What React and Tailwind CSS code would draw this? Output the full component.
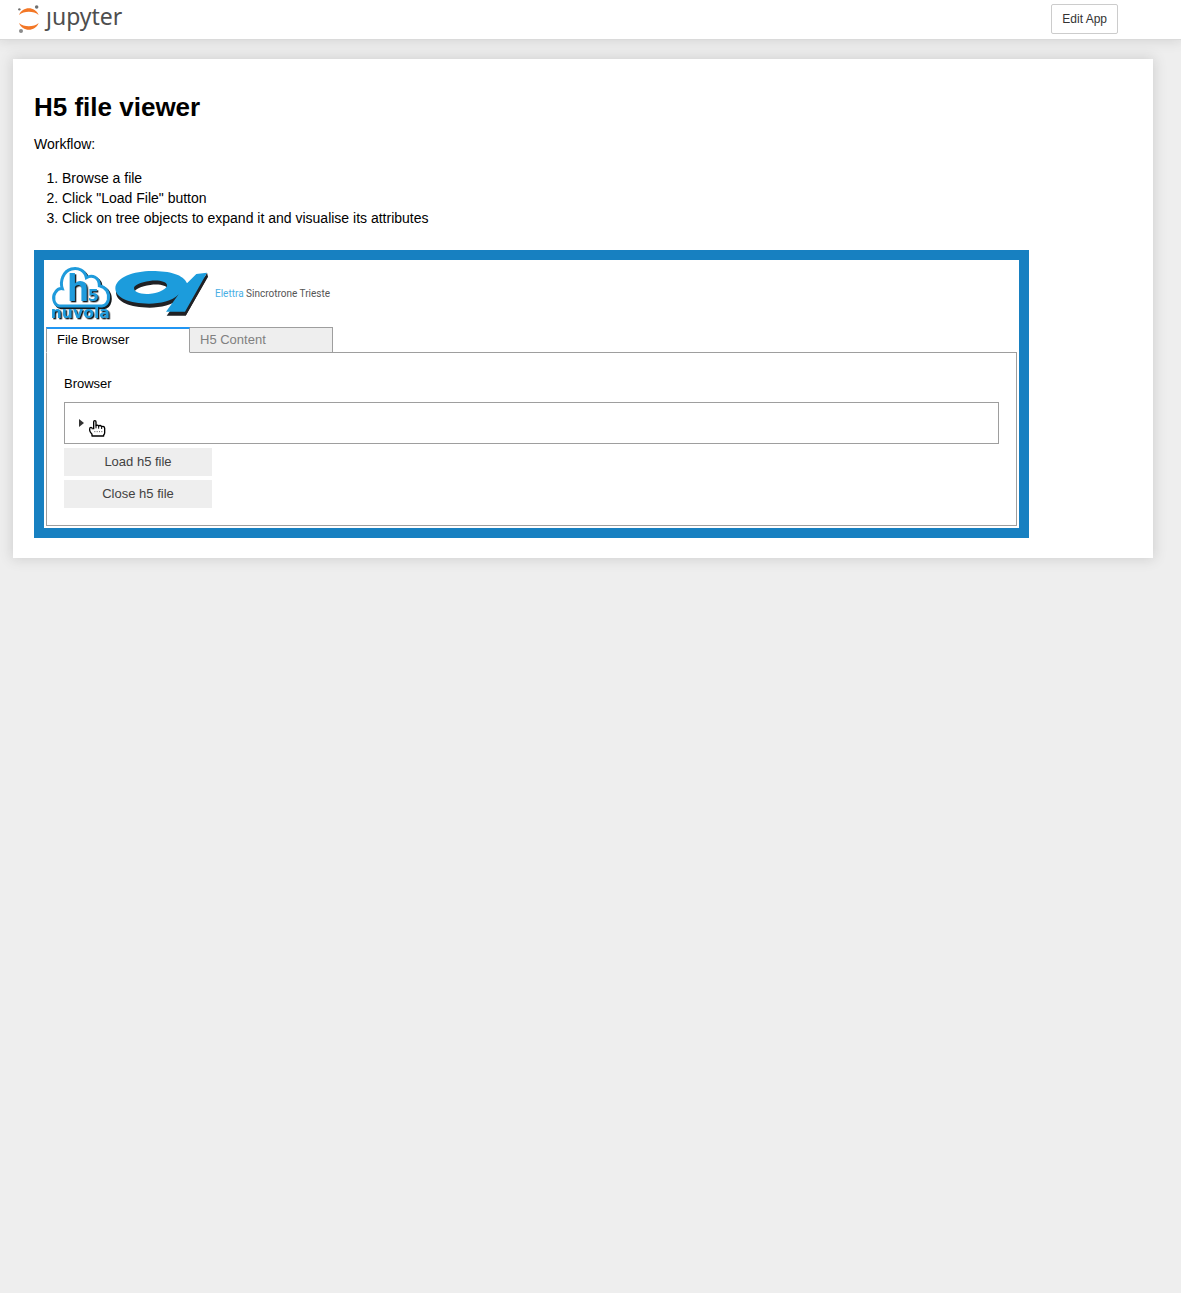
import React, { useState } from "react";

function JupyterMark() {
  return (
    <svg className="h-[30px] w-[24px]" viewBox="0 0 72 90" aria-hidden="true">
      <path d="M3 33C13 6 52 6 62 33C47 20 18 20 3 33Z" fill="#f37726" />
      <path d="M3 57C13 84 52 84 62 57C47 70 18 70 3 57Z" fill="#f37726" />
      <circle cx="56" cy="9" r="5.3" fill="#6f7070" />
      <circle cx="4" cy="16" r="3.6" fill="#6f7070" />
      <circle cx="9" cy="81" r="6" fill="#8b8b8b" />
    </svg>
  );
}

const CLOUD =
  "M57 150C41 146 36 123 46 109C52 100 61 97 67 98C59 75 70 46 94 39C116 33 135 45 139 65C157 54 178 65 178 89C198 93 209 111 205 131C202 144 196 149 186 150Z";

function NuvolaLogo() {
  return (
    <svg
      className="h-[64px] w-[69px]"
      viewBox="18 18 207 192"
      role="img"
      aria-label="h5 nuvola"
      fontFamily='"DejaVu Sans", sans-serif'
      fontWeight="bold"
    >
      <path d={CLOUD} fill="none" stroke="#14191d" strokeWidth="9" transform="translate(5 5)" />
      <path d={CLOUD} fill="#fff" stroke="#1f9bdc" strokeWidth="9" />
      <g fill="#1f9bdc" className="[filter:drop-shadow(4px_4px_0_#14191d)]">
        <text x="83" y="136" fontSize="112" fontFamily="Roboto, sans-serif">h</text>
        <text x="143" y="136" fontSize="48">5</text>
        <text x="32" y="186" fontSize="47">nuvola</text>
      </g>
    </svg>
  );
}

const SWOOSH =
  "M15 85C16 52 70 33 125 33C178 33 220 44 230 70L258 42L290 38L224 155L167 155L205 103C185 124 150 131 116 131C57 131 15 114 15 85ZM71 84C71 97 92 104 121 101C149 98 171 86 170 75C168 64 143 59 118 63C90 67 71 76 71 84Z";

function ElettraLogo() {
  return (
    <svg className="h-[48px] w-[94px]" viewBox="14 30 282 144" role="img" aria-label="Elettra">
      <path d={SWOOSH} fill="#202124" fillRule="evenodd" transform="translate(2 12)" />
      <path d="M290 38L293 50L226 167L224 155Z" fill="#202124" />
      <path d={SWOOSH} fill="#1c9cdc" fillRule="evenodd" />
    </svg>
  );
}

function HandCursor() {
  return (
    <svg className="absolute left-[24px] top-[17px] h-[18px] w-[18px]" viewBox="0 0 54 54" aria-hidden="true">
      <path
        d="M14 28V6Q14 2 17.500 2T21 6V17Q25 13 29 18Q34 14 38 20Q46 17 47 25V38Q47 42 44 45V48H9V43Q2 36 2 31V27Q2 22 6 22Q10 22 10 28"
        fill="#fff"
        stroke="#000"
        strokeWidth="4"
        strokeLinejoin="round"
      />
      <path d="M21 17V25M29 18V26M38 20V27" stroke="#000" strokeWidth="3" />
      <path d="M16 35H42" stroke="#555" strokeWidth="3" strokeDasharray="3 4" />
    </svg>
  );
}

const TABS = ["File Browser", "H5 Content"];

export default function App() {
  const [active, setActive] = useState(0);
  return (
    <div className='min-h-screen bg-[#eee] font-["Liberation_Sans",Arial,sans-serif] text-[14px] leading-[20px] text-black'>
      <header className="relative flex h-[39px] items-center justify-between bg-white pb-[2px] pl-[18px] pr-[63px] shadow-[0_1px_0_#dadada,0_0_12px_1px_rgba(87,87,87,0.2)]">
        <a href="#" aria-label="jupyter" className="flex items-center gap-[4px]">
          <JupyterMark />
          <span className='pb-[5px] font-["Noto_Sans",sans-serif] text-[23px] leading-[30px] text-[#4e4e4e]'>ȷupyter</span>
        </a>
        <button type="button" className="h-[30px] rounded-[2px] border border-[#ccc] px-[10px] text-[12px] leading-[18px] text-[#333]">
          Edit App
        </button>
      </header>

      <main className="ml-[13px] mr-[28px] mt-[20px] bg-white pb-[20px] pl-[21px] pr-[124px] pt-[35px] shadow-[0_0_12px_1px_rgba(87,87,87,0.2)]">
        <h1 className="text-[26px] font-bold leading-[26px]">H5 file viewer</h1>
        <p className="mt-[14px]">Workflow:</p>
        <ol className="mt-[14px] list-decimal pl-[28px]">
          <li>Browse a file</li>
          <li>Click "Load File" button</li>
          <li>Click on tree objects to expand it and visualise its attributes</li>
        </ol>

        <section className="mt-[22px] border-[10px] border-[#1780c1] p-[2px]">
          <div className="flex h-[65px] items-start">
            <NuvolaLogo />
            <div className="flex items-center pt-[8px]">
              <ElettraLogo />
              <p className="ml-[6px] font-[Roboto,sans-serif] text-[10px] leading-[12px] text-[#555]">
                <span className="text-[#4aaee4]">Elettra</span> Sincrotrone Trieste
              </p>
            </div>
          </div>

          <div role="tablist" className="relative flex text-[13px] leading-[24px]">
            {TABS.map((name, i) => (
              <button
                key={name}
                type="button"
                role="tab"
                id={"tab-" + i}
                aria-controls="tab-panel"
                aria-selected={active === i}
                onClick={() => setActive(i)}
                className={
                  "-mr-px -mb-px h-[26px] w-[144px] border border-[#9e9e9e] px-[10px] text-left " +
                  (active === i
                    ? "relative border-b-white border-t-2 border-t-[#2196f3] bg-white pb-[2px] leading-[20px]"
                    : "bg-[#eee] text-[#808080]")
                }
              >
                {name}
              </button>
            ))}
          </div>

          <div
            role="tabpanel"
            id="tab-panel"
            aria-labelledby={"tab-" + active}
            className="flex flex-col gap-[4px] border border-[#9e9e9e] p-[17px] text-[13px]"
          >
            <div className="h-[28px] leading-[28px]">Browser</div>
            <div className="relative h-[42px] border border-[#9e9e9e]">
              <button type="button" aria-label="Expand" className="flex h-[40px] w-[40px] items-center pl-[14px]">
                <svg className="h-[8px] w-[5px]" viewBox="0 0 5 8" aria-hidden="true">
                  <path d="M0 0L5 4L0 8Z" fill="#333" />
                </svg>
              </button>
              <HandCursor />
            </div>
            <button type="button" className="h-[28px] w-[148px] bg-[#eee] leading-[28px] text-[#424242]">Load h5 file</button>
            <button type="button" className="h-[28px] w-[148px] bg-[#eee] leading-[28px] text-[#424242]">Close h5 file</button>
          </div>
        </section>
      </main>
    </div>
  );
}
